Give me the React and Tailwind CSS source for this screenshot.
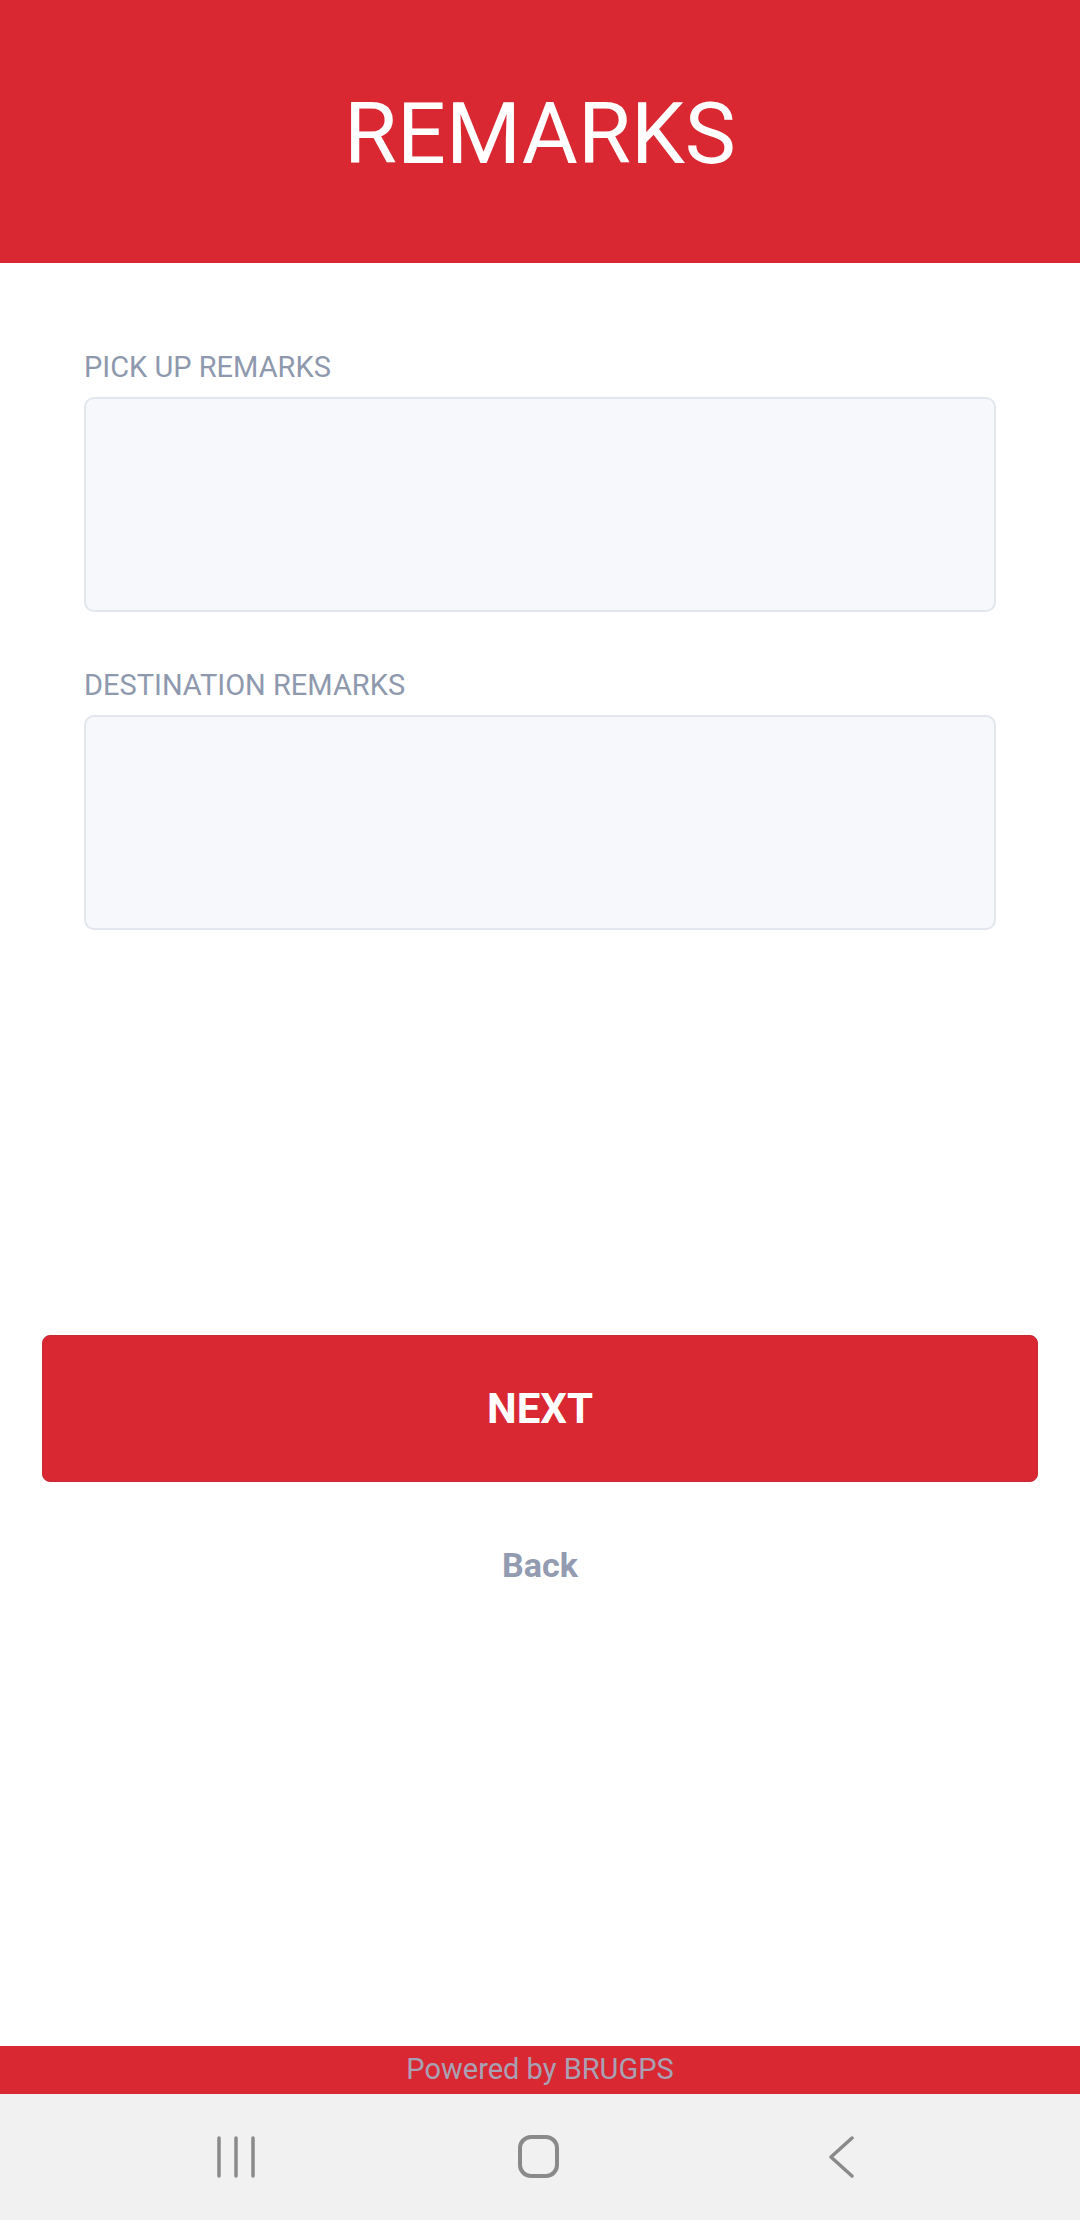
import React from "react";

const font = { fontFamily: "Roboto, 'Liberation Sans', sans-serif" };

const Field = ({ label, className }) => (
  <div className={className}>
    <label className="block text-[29px] leading-[36px] text-[#8e99ae] uppercase">
      {label}
    </label>
    <textarea className="mt-3 block w-full h-[215px] resize-none rounded-[10px] border-2 border-[#e3e6ee] bg-[#f7f8fc] outline-none" />
  </div>
);

export default function App() {
  return (
    <div className="flex flex-col h-[2220px] w-[1080px] bg-white" style={font}>
      {/* Header */}
      <header className="h-[263px] bg-[#da2833] flex items-center justify-center">
        <h1 className="text-[86px] leading-none text-white font-normal mt-[4px]">REMARKS</h1>
      </header>

      {/* Form */}
      <main className="flex-1 flex flex-col">
        <div className="px-[84px] pt-[86px]">
          <Field label="Pick up remarks" />
          <Field label="Destination remarks" className="mt-[55px]" />
        </div>

        <div className="px-[42px] mt-[405px]">
          <button className="w-full h-[147px] rounded-[8px] bg-[#da2833] border border-[#c52a35] text-white font-bold text-[42px]">
            NEXT
          </button>
        </div>

        <div className="mt-[63px] text-center text-[34px] leading-[40px] font-bold text-[#929bb0]">
          Back
        </div>
      </main>

      {/* Footer */}
      <footer className="h-[48px] bg-[#da2833] flex items-center justify-center">
        <span className="text-[29px] text-[#a8a1b3]">Powered by BRUGPS</span>
      </footer>

      {/* Android nav bar */}
      <nav className="h-[126px] bg-[#f1f1f1] flex items-center pl-[216px]">
        <svg width="40" height="42" viewBox="0 0 40 42" fill="none" stroke="#8a8a8a" strokeWidth="3.5" strokeLinecap="round">
          <line x1="3" y1="2" x2="3" y2="40" />
          <line x1="20" y1="2" x2="20" y2="40" />
          <line x1="37" y1="2" x2="37" y2="40" />
        </svg>
        <svg className="ml-[258px]" width="48" height="44" viewBox="0 0 48 44" fill="none" stroke="#8a8a8a" strokeWidth="4">
          <rect x="6" y="2" width="37" height="39" rx="11" />
        </svg>
        <svg className="ml-[259px]" width="40" height="42" viewBox="0 0 40 42" fill="none" stroke="#8a8a8a" strokeWidth="3.5" strokeLinecap="round" strokeLinejoin="round">
          <polyline points="31,2 10,21 31,40" />
        </svg>
      </nav>
    </div>
  );
}
